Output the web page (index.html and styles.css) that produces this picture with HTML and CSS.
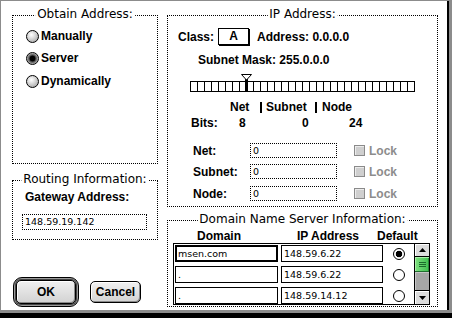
FILE: index.html
```html
<!DOCTYPE html>
<html>
<head>
<meta charset="utf-8">
<link rel="stylesheet" href="styles.css">
</head>
<body>
<div class="frame">
  <div class="window">
    <div class="col col-left">
      <div class="group obtain">
        <span class="gtitle">Obtain Address:</span>
        <div class="radio-row"><span class="radio3d"></span><span class="blabel">Manually</span></div>
        <div class="radio-row"><span class="radio3d on"></span><span class="blabel">Server</span></div>
        <div class="radio-row r3"><span class="radio3d"></span><span class="blabel">Dynamically</span></div>
      </div>
      <div class="group routing">
        <span class="gtitle">Routing Information:</span>
        <div class="blabel gw">Gateway Address:</div>
        <div class="field gwfield">148.59.19.142</div>
      </div>
      <div class="buttons">
        <div class="ring"><div class="btn ok">OK</div></div>
        <div class="btn cancel">Cancel</div>
      </div>
    </div>
    <div class="col col-right">
      <div class="group ip">
        <span class="gtitle">IP Address:</span>
        <div class="class-row">
          <span class="blabel">Class:</span>
          <span class="classbox blabel">A</span>
          <span class="blabel addr">Address: 0.0.0.0</span>
        </div>
        <div class="blabel mask">Subnet Mask: 255.0.0.0</div>
        <div class="slider">
          <div class="bar"></div>
          <svg class="marker" width="11" height="18" viewBox="0 0 11 18">
            <rect x="4" y="5" width="3" height="13" fill="#000"/>
            <polygon points="0.5,0.5 10.5,0.5 5.5,6" fill="#fff" stroke="#000" stroke-width="1"/>
          </svg>
        </div>
        <div class="bits-head blabel">
          <span class="bh-net">Net</span><span class="pipe p1"></span><span class="bh-sub">Subnet</span><span class="pipe p2"></span><span>Node</span>
        </div>
        <div class="bits-row blabel">
          <span class="b1">Bits:</span><span class="b2">8</span><span class="b3">0</span><span>24</span>
        </div>
        <div class="nsn">
          <div class="nrow"><span class="blabel nl">Net:</span><span class="field nf">0</span><span class="chk"></span><span class="lock">Lock</span></div>
          <div class="nrow n2"><span class="blabel nl">Subnet:</span><span class="field nf">0</span><span class="chk"></span><span class="lock">Lock</span></div>
          <div class="nrow n3"><span class="blabel nl">Node:</span><span class="field nf">0</span><span class="chk"></span><span class="lock">Lock</span></div>
        </div>
      </div>
      <div class="group dns">
        <span class="gtitle">Domain Name Server Information:</span>
        <div class="dns-head blabel">
          <span class="dh1">Domain</span><span class="dh2">IP Address</span><span>Default</span>
        </div>
        <div class="table">
          <div class="rows">
            <div class="trow">
              <span class="cell dom sel">msen.com</span><span class="cell ipc">148.59.6.22</span><span class="dradio on"></span>
            </div>
            <div class="trow">
              <span class="cell dom">.</span><span class="cell ipc">148.59.6.22</span><span class="dradio"></span>
            </div>
            <div class="trow">
              <span class="cell dom">.</span><span class="cell ipc">148.59.14.12</span><span class="dradio"></span>
            </div>
          </div>
          <div class="scroll">
            <div class="sarrow up">
              <svg width="7" height="4" viewBox="0 0 7 4"><polygon points="3.5,0 7,4 0,4" fill="#000"/></svg>
            </div>
            <div class="thumb"><span class="grip"></span></div>
            <div class="track"></div>
            <div class="sarrow down">
              <svg width="7" height="4" viewBox="0 0 7 4"><polygon points="0,0 7,0 3.5,4" fill="#000"/></svg>
            </div>
          </div>
        </div>
      </div>
    </div>
  </div>
</div>
</body>
</html>
```
FILE: styles.css
```css
* { box-sizing: border-box; }
html, body { margin: 0; padding: 0; background: #8c8c8c; }

.frame {
  width: 452px;
  height: 318px;
  background: #8c8c8c;
  border-bottom: 5px solid #000;
  padding: 1px 0 0 1px;
}
.window {
  width: 448px;
  height: 309px;
  background: #fff;
  border-right: 2px solid #000;
  display: flex;
  gap: 9px;
  padding: 14px 0 0 11px;
}
.col { display: flex; flex-direction: column; }
.col-left { width: 146px; }
.col-right { width: 271px; }

.group {
  position: relative;
  border: 1px dotted #000;
}
.gtitle {
  position: absolute;
  top: -9px;
  left: 50%;
  transform: translateX(-50%);
  background: #fff;
  padding: 0 2px;
  white-space: nowrap;
  font: 12px/14px "DejaVu Sans", sans-serif;
  color: #000;
}
.blabel {
  font: bold 12px/14px "Liberation Sans", Arial, sans-serif;
  color: #000;
  white-space: nowrap;
}
.field {
  font: 9.5px/13px "DejaVu Sans", sans-serif;
  color: #000;
  white-space: nowrap;
}

/* Obtain address */
.obtain { height: 149px; padding: 9px 0 0 13px; }
.radio-row { display: flex; align-items: center; height: 22px; }
.r3 { margin-top: 1px; }
.radio3d {
  width: 13px; height: 13px;
  border: 1px solid #000;
  border-radius: 50%;
  margin-right: 2px;
  background: radial-gradient(circle at 40% 35%, #fff 0, #e2e2e2 30%, #a8a8a8 85%);
}
.radio3d.on {
  background: radial-gradient(circle at 50% 50%, #000 0, #000 2.6px, #444 3.2px, #6a6a6a 4px, #b5b5b5 5.5px);
}

/* Routing */
.routing { height: 60px; margin-top: 16px; padding: 9px 0 0 12px; }
.gwfield {
  margin: 10px 0 0 -3px;
  width: 125px;
  height: 16px;
  border: 1px dotted #000;
  padding-left: 2px;
  line-height: 14px;
}

/* Buttons */
.buttons { display: flex; align-items: center; margin-top: 37px; padding-left: 1px; }
.ring {
  width: 66px; height: 30px;
  border: 1px solid #000;
  border-radius: 9px;
  padding: 2px;
  background: #9a9a9a;
}
.btn {
  display: flex; align-items: center; justify-content: center;
  border: 1px solid #000;
  border-radius: 5px;
  background: linear-gradient(#f0f0f0, #d2d2d2);
  box-shadow: inset 1px 1px 0 #fff, inset -1px -1px 0 #8a8a8a;
  font: bold 12px/14px "Liberation Sans", Arial, sans-serif;
  color: #000;
}
.ok { width: 100%; height: 100%; border-color: #000; box-shadow: 0 0 0 1px #444, inset 1px 1px 0 #fff, inset -1px -1px 0 #8a8a8a; }
.cancel { width: 51px; height: 22px; margin-left: 11px; }

/* IP box */
.ip { height: 192px; padding: 12px 0 0 10px; }
.class-row { display: flex; align-items: center; height: 17px; }
.classbox {
  width: 31px; height: 17px;
  margin-left: 4px;
  border: 1px solid #000;
  box-shadow: 1px 1px 0 #000;
  text-align: center;
  line-height: 15px;
}
.addr { margin-left: 8px; }
.mask { margin-top: 8px; padding-left: 20px; }
.slider {
  position: relative;
  width: 225px;
  margin: 7px 0 0 12px;
  padding-top: 7px;
}
.bar {
  height: 11px;
  border: 1px solid #000;
  background: repeating-linear-gradient(to right, #fff 0, #fff 6px, #000 6px, #000 7px);
}
.marker { position: absolute; left: 51px; top: 0; }

.bits-head { display: flex; align-items: center; margin-top: 8px; padding-left: 52px; height: 14px; }
.bh-net { width: 30px; }
.pipe { width: 2px; height: 11px; background: #000; }
.p1 { margin-right: 4px; }
.bh-sub { width: 49px; }
.p2 { margin-left: 0; margin-right: 5px; }

.bits-row { display: flex; margin-top: 2px; padding-left: 13px; height: 14px; }
.b1 { width: 48px; }
.b2 { width: 63px; }
.b3 { width: 47px; }

.nsn { margin-top: 13px; padding-left: 15px; }
.nrow { display: flex; align-items: center; height: 15px; }
.n2 { margin-top: 6px; }
.n3 { margin-top: 7px; }
.nl { width: 57px; }
.nf {
  width: 87px; height: 15px;
  border: 1px dotted #000;
  padding-left: 2px;
}
.chk {
  width: 11px; height: 11px;
  margin-left: 17px;
  border: 1px solid #8a8a8a;
  background: #cfcfcf;
  box-shadow: inset 1px 1px 0 #ececec;
}
.lock {
  margin-left: 4px;
  font: bold 12px/14px "Liberation Sans", Arial, sans-serif;
  color: #8c8c8c;
}

/* DNS box */
.dns { height: 87px; margin-top: 13px; padding-top: 8px; }
.dns-head { display: flex; padding-left: 29px; height: 14px; }
.dh1 { width: 100px; }
.dh2 { width: 80px; }
.table {
  display: flex;
  width: 257px; height: 62px;
  margin-left: 5px;
  border: 1px solid #000;
}
.rows { flex: 1; padding: 1px 0 0 1px; display: flex; flex-direction: column; gap: 4px; }
.trow { display: flex; align-items: center; height: 17px; }
.cell {
  height: 17px;
  border: 1px solid #000;
  padding-left: 2px;
  font: 9.5px/15px "DejaVu Sans", sans-serif;
  color: #000;
  white-space: nowrap;
}
.dom { width: 103px; }
.dom.sel { border-width: 2px; padding-left: 1px; line-height: 13px; }
.ipc { width: 102px; margin-left: 3px; }
.dradio {
  width: 12px; height: 12px;
  margin-left: 10px;
  border: 1px solid #000;
  border-radius: 50%;
  background: #fff;
}
.dradio.on { background: radial-gradient(circle, #000 0, #000 3px, #fff 3.6px); }

.scroll {
  width: 15px;
  border-left: 1px solid #000;
  display: flex; flex-direction: column;
}
.sarrow {
  display: flex; align-items: center; justify-content: center;
  background: #dcdcdc;
  box-shadow: inset 1px 1px 0 #fff;
}
.sarrow.up { height: 13px; border-bottom: 1px solid #000; }
.sarrow.down { height: 14px; border-top: 1px solid #000; }
.thumb {
  height: 15px;
  background: linear-gradient(to right, #7fe07f, #3fbf4f);
  border-bottom: 1px solid #1f6f2f;
  box-shadow: inset 1px 1px 0 #a8f0a8, inset -1px 0 0 #2a8a3a;
  display: flex; align-items: center; justify-content: center;
}
.grip {
  width: 7px; height: 5px;
  background: repeating-linear-gradient(to bottom, #1b6b2b 0, #1b6b2b 1px, transparent 1px, transparent 2px);
}
.track {
  flex: 1;
  background: #a6a6a6;
  box-shadow: inset 1px 1px 0 #c8c8c8;
}
```
